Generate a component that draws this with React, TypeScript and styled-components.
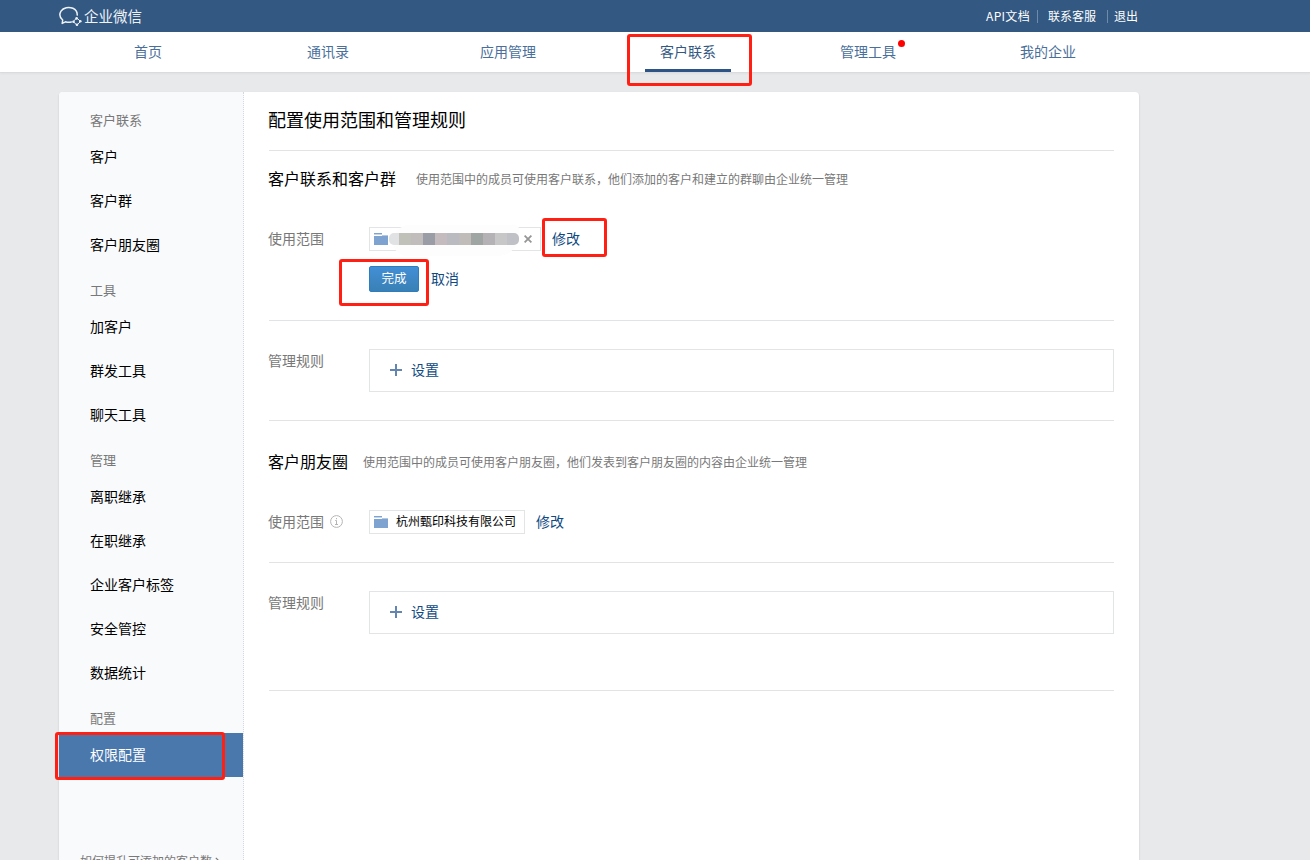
import React from 'react';
import styled, { createGlobalStyle } from 'styled-components';

const GlobalStyle = createGlobalStyle`
  * { box-sizing: border-box; }
  html, body { margin: 0; padding: 0; }
  body {
    background: #e7e9eb;
    color: #000;
    font-family: "Noto Sans CJK SC", sans-serif;
    font-size: 14px;
    overflow: hidden;
  }
`;

const Page = styled.div`
  position: relative;
  height: 860px;
  overflow: hidden;
  display: flex;
  flex-direction: column;
`;

const TopBar = styled.header`
  flex: none;
  height: 32px;
  padding-left: 59px;
  background: #335882;
`;

const TopInner = styled.div`
  width: 1079px;
  height: 32px;
  display: flex;
  align-items: center;
  justify-content: space-between;
`;

const Brand = styled.div`
  display: flex;
  align-items: center;
  gap: 2px;
  color: #eef3f8;
  font-size: 14.5px;
  line-height: 30px;
  svg { display: block; }
`;

const TopLinks = styled.div`
  display: flex;
  align-items: center;
  color: #fff;
  font-size: 12px;
  line-height: 30px;
`;

const TopLink = styled.a<{ $spacing?: number }>`
  white-space: nowrap;
  letter-spacing: ${p => p.$spacing ?? 0}px;
`;

const Separator = styled.span<{ $before: number; $after: number }>`
  width: 1px;
  height: 13px;
  margin: 1px ${p => p.$after}px 0 ${p => p.$before}px;
  background: #6e8bab;
`;

const NavBar = styled.nav`
  flex: none;
  height: 41px;
  padding-left: 58px;
  display: flex;
  background: #fff;
  border-bottom: 1px solid #d9dbdd;
  box-shadow: 0 1px 2px rgba(0, 0, 0, 0.04);
`;

const NavItem = styled.a<{ $active?: boolean }>`
  width: 180px;
  height: 40px;
  display: flex;
  justify-content: center;
  color: ${p => (p.$active ? '#335882' : '#4a6f9b')};
`;

const NavLabel = styled.span<{ $active?: boolean }>`
  position: relative;
  height: 40px;
  padding: 0 15px;
  line-height: 38px;
  border-bottom: ${p => (p.$active ? '3px solid #2d5485' : '0')};
`;

const Dot = styled.i`
  position: absolute;
  top: 8px;
  right: 6px;
  width: 7px;
  height: 7px;
  border-radius: 50%;
  background: #fe0000;
`;

const Card = styled.div`
  flex: 1;
  width: 1080px;
  margin: 19px 0 0 59px;
  display: flex;
  background: #fff;
  border-radius: 4px 4px 0 0;
  box-shadow: 0 1px 2px rgba(0, 0, 0, 0.16);
  overflow: hidden;
`;

const Sidebar = styled.aside`
  flex: none;
  width: 185px;
  padding-top: 5px;
  background: #f9fafc;
  border-right: 1px dotted #d3d9de;
`;

const GroupTitle = styled.div`
  height: 38px;
  padding: 9px 0 0 31px;
  color: #787878;
  font-size: 13px;
  line-height: 28px;
`;

const SideItem = styled.a<{ $active?: boolean }>`
  display: block;
  height: 44px;
  padding-left: 31px;
  line-height: 42px;
  color: ${p => (p.$active ? '#fff' : '#000')};
  background: ${p => (p.$active ? '#4a78ad' : 'transparent')};
`;

const SideHelp = styled.a`
  display: flex;
  align-items: center;
  gap: 3px;
  margin-top: 74px;
  padding-left: 21px;
  color: #787878;
  font-size: 12px;
  line-height: 20px;
`;

const Content = styled.main`
  flex: 1;
  padding: 0 25px;
`;

const PageTitle = styled.h1`
  height: 59px;
  margin: 0;
  text-indent: -1px;
  font-size: 18px;
  font-weight: 400;
  line-height: 55px;
  border-bottom: 1px solid #e1e3e4;
`;

const SectionHead = styled.div<{ $gap: number; $height: number; $top: number }>`
  height: ${p => p.$height}px;
  padding-top: ${p => p.$top}px;
  display: flex;
  gap: ${p => p.$gap}px;
  line-height: 24px;
`;

const SectionTitle = styled.h2`
  margin: 0;
  text-indent: -1px;
  font-size: 16px;
  font-weight: 400;
`;

const SectionNote = styled.span`
  padding-top: 1px;
  margin-left: 1px;
  color: #787878;
  font-size: 12px;
`;

const Row = styled.div<{ $height: number; $top?: number }>`
  height: ${p => p.$height}px;
  padding-top: ${p => p.$top ?? 0}px;
  display: flex;
  align-items: flex-start;
  border-bottom: 1px solid #e1e3e4;
`;

const RowLabel = styled.div`
  flex: none;
  width: 100px;
  display: flex;
  align-items: center;
  gap: 6px;
  color: #787878;
  line-height: 22px;
  text-indent: -1px;
`;

const RowBody = styled.div`
  flex: 1;
  display: flex;
  flex-direction: column;
  gap: 15px;
`;

const Line = styled.div<{ $gap: number }>`
  display: flex;
  align-items: center;
  gap: ${p => p.$gap}px;
`;

const Chip = styled.div<{ $width: number }>`
  width: ${p => p.$width}px;
  height: 24px;
  padding-left: 4px;
  display: flex;
  align-items: center;
  border: 1px solid #e2e4e6;
  font-size: 12px;
  line-height: 20px;
  white-space: nowrap;
  svg { flex: none; display: block; }
`;

const ChipText = styled.span`
  margin-left: 8px;
  padding-bottom: 2px;
`;

const Redaction = styled.span`
  position: relative;
  width: 130px;
  height: 12px;
  margin: 0 5px 0 1px;
  display: flex;
  &::before {
    content: '';
    position: absolute;
    left: 4px;
    top: -8px;
    width: 126px;
    height: 31px;
    border-radius: 24px 6px 30px 20px;
    background: #fdfdfd;
  }
`;

const Blocks = styled.span`
  position: relative;
  flex: 1;
  display: flex;
  border-radius: 5px;
  overflow: hidden;
`;

const Block = styled.i<{ $color: string; $width?: number }>`
  flex: none;
  width: ${p => p.$width ?? 12}px;
  background: ${p => p.$color};
`;

const Link = styled.a`
  padding-bottom: 2px;
  color: #0f4b82;
  line-height: 22px;
`;

const PrimaryButton = styled.button`
  width: 50px;
  height: 26px;
  padding: 0 0 2px;
  border: 1px solid #2e7dbd;
  border-radius: 2px;
  background: linear-gradient(#438fd6, #3980b5);
  color: #fff;
  font-family: inherit;
  font-size: 12.5px;
  line-height: 22px;
`;

const RuleBox = styled.div`
  flex: 1;
  height: 43px;
  padding: 0 0 2px 20px;
  display: flex;
  align-items: center;
  gap: 9px;
  border: 1px solid #e2e4e6;
`;

const Highlight = styled.div<{ $x: number; $y: number; $w: number; $h: number }>`
  position: absolute;
  left: ${p => p.$x}px;
  top: ${p => p.$y}px;
  width: ${p => p.$w}px;
  height: ${p => p.$h}px;
  border: 3px solid #ff2013;
  border-radius: 3px;
  pointer-events: none;
`;

const Logo = () => (
  <svg width="23" height="21" viewBox="0 0 23 21" fill="none" stroke="#eef3f8">
    <path
      d="M18.2 9.600C18.500 6.200 16.700 3.600 13.900 2.300C9.800 .5 4.300 1.500 2 5.100C.2 8.100 .8 11.600 3.700 14L3.200 17.400L6.500 15.800C8.500 16.500 10.800 16.500 12.800 15.800"
      strokeWidth="1.5"
      strokeLinejoin="round"
    />
    <path d="M17.800 11.900L21.500 15.500L17.800 19.100L14.200 15.500Z" strokeWidth="1" />
    <g fill="#eef3f8" stroke="none">
      <circle cx="17.600" cy="12.400" r="1.300" />
      <circle cx="21.300" cy="15.300" r="1.300" />
      <circle cx="18" cy="18.800" r="1.300" />
      <circle cx="14.500" cy="15.700" r="1.300" />
    </g>
  </svg>
);

const FolderIcon = () => (
  <svg width="14" height="12" viewBox="0 0 14 12" fill="#7fa3d1">
    <path d="M0 0H8V1H0Z" />
    <path d="M0 1H8V2H0Z" opacity=".45" />
    <path d="M8 2H14V3H8Z" opacity=".6" />
    <path d="M0 3H14V12H0Z" />
  </svg>
);

const PlusIcon = () => (
  <svg width="12" height="12" viewBox="0 0 12 12" fill="#6485af">
    <path d="M5 0H7V5H12V7H7V12H5V7H0V5H5Z" />
  </svg>
);

const CloseIcon = () => (
  <svg width="8" height="8" viewBox="0 0 8 8" fill="none" stroke="#969696" strokeWidth="1.800">
    <path d="M.6 .6L7.400 7.400M7.400 .6L.6 7.400" />
  </svg>
);

const InfoIcon = () => (
  <svg width="13" height="13" viewBox="0 0 13 13" fill="none" stroke="#b5b5b5">
    <circle cx="6.500" cy="6.500" r="5.900" />
    <path d="M6.500 3V4.200M5.200 5.500H6.500V9.500M5 9.500H8" />
  </svg>
);

const ChevronIcon = () => (
  <svg width="5" height="8" viewBox="0 0 5 8" fill="none" stroke="#787878" strokeWidth="1.200">
    <path d="M.8 .8L4 4L.8 7.200" />
  </svg>
);

const navItems = ['首页', '通讯录', '应用管理', '客户联系', '管理工具', '我的企业'];

const groups = [
  { title: '客户联系', items: ['客户', '客户群', '客户朋友圈'] },
  { title: '工具', items: ['加客户', '群发工具', '聊天工具'] },
  { title: '管理', items: ['离职继承', '在职继承', '企业客户标签', '安全管控', '数据统计'] },
  { title: '配置', items: ['权限配置'] },
];

const blockColors = [
  '#c0c1b9', '#c1bdbd', '#9b9da6', '#c3bbbd', '#b9bbc1', '#bfbcb9',
  '#9ea5a3', '#b4b2b5', '#c7c7c8', '#bfc1c6',
];

export default function App() {
  return (
    <>
      <GlobalStyle />
      <Page>
        <TopBar>
          <TopInner>
            <Brand>
              <Logo />
              <span>企业微信</span>
            </Brand>
            <TopLinks>
              <TopLink $spacing={0.3}>API文档</TopLink>
              <Separator $before={7} $after={10} />
              <TopLink>联系客服</TopLink>
              <Separator $before={11} $after={6} />
              <TopLink>退出</TopLink>
            </TopLinks>
          </TopInner>
        </TopBar>
        <NavBar>
          {navItems.map(name => (
            <NavItem key={name} $active={name === '客户联系'}>
              <NavLabel $active={name === '客户联系'}>
                {name}
                {name === '管理工具' && <Dot />}
              </NavLabel>
            </NavItem>
          ))}
        </NavBar>
        <Card>
          <Sidebar>
            {groups.map(group => (
              <React.Fragment key={group.title}>
                <GroupTitle>{group.title}</GroupTitle>
                {group.items.map(item => (
                  <SideItem key={item} $active={item === '权限配置'}>{item}</SideItem>
                ))}
              </React.Fragment>
            ))}
            <SideHelp>
              如何提升可添加的客户数
              <ChevronIcon />
            </SideHelp>
          </Sidebar>
          <Content>
            <PageTitle>配置使用范围和管理规则</PageTitle>

            <SectionHead $gap={19} $height={76} $top={15}>
              <SectionTitle>客户联系和客户群</SectionTitle>
              <SectionNote>使用范围中的成员可使用客户联系，他们添加的客户和建立的群聊由企业统一管理</SectionNote>
            </SectionHead>
            <Row $height={94}>
              <RowLabel>使用范围</RowLabel>
              <RowBody>
                <Line $gap={11}>
                  <Chip $width={172}>
                    <FolderIcon />
                    <Redaction>
                      <Blocks>
                        <Block $color="#e1e2e4" $width={10} />
                        {blockColors.map(color => (
                          <Block key={color} $color={color} />
                        ))}
                      </Blocks>
                    </Redaction>
                    <CloseIcon />
                  </Chip>
                  <Link>修改</Link>
                </Line>
                <Line $gap={12}>
                  <PrimaryButton>完成</PrimaryButton>
                  <Link>取消</Link>
                </Line>
              </RowBody>
            </Row>
            <Row $height={100} $top={28}>
              <RowLabel>管理规则</RowLabel>
              <RuleBox>
                <PlusIcon />
                <Link>设置</Link>
              </RuleBox>
            </Row>

            <SectionHead $gap={14} $height={89} $top={28}>
              <SectionTitle>客户朋友圈</SectionTitle>
              <SectionNote>使用范围中的成员可使用客户朋友圈，他们发表到客户朋友圈的内容由企业统一管理</SectionNote>
            </SectionHead>
            <Row $height={53}>
              <RowLabel>
                使用范围
                <InfoIcon />
              </RowLabel>
              <RowBody>
                <Line $gap={11}>
                  <Chip $width={156}>
                    <FolderIcon />
                    <ChipText>杭州甄印科技有限公司</ChipText>
                  </Chip>
                  <Link>修改</Link>
                </Line>
              </RowBody>
            </Row>
            <Row $height={128} $top={28}>
              <RowLabel>管理规则</RowLabel>
              <RuleBox>
                <PlusIcon />
                <Link>设置</Link>
              </RuleBox>
            </Row>
          </Content>
        </Card>
        <Highlight $x={627} $y={34} $w={125} $h={52} />
        <Highlight $x={542} $y={218} $w={65} $h={39} />
        <Highlight $x={339} $y={259} $w={90} $h={47} />
        <Highlight $x={55} $y={732} $w={170} $h={48} />
      </Page>
    </>
  );
}
